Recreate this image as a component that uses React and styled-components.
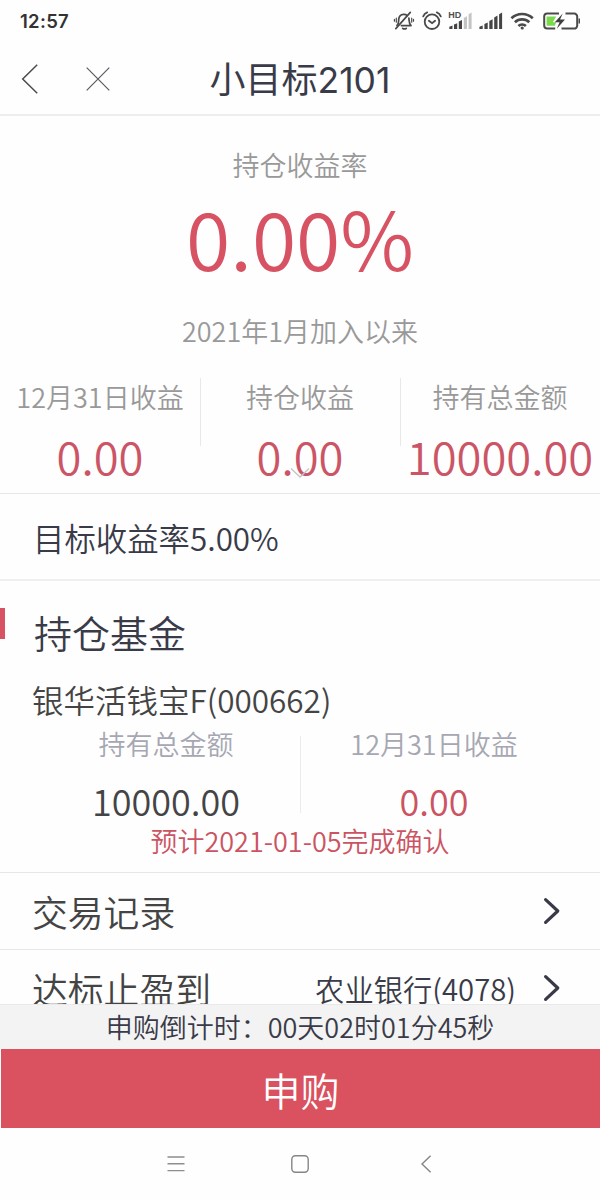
import React from 'react';
import styled, { createGlobalStyle } from 'styled-components';

const App = () => {
  return (
    <Phone>
      <GlobalStyle />
      <StatusBar>
        <Clock>12:57</Clock>
        <StatusIcons />
      </StatusBar>

      <Header>
        <HeaderButton aria-label="返回">
          <svg width="18" height="32" viewBox="0 0 18 32" fill="none">
            <path d="M16.2 2.8 1.7 17 16.2 31.2" stroke="#4a4b52" strokeWidth="1.5" />
          </svg>
        </HeaderButton>
        <HeaderButton aria-label="关闭">
          <svg width="26" height="26" viewBox="0 0 26 26" fill="none">
            <path d="M1.7 2.7 24.3 25.3M24.3 2.7 1.7 25.3" stroke="#5a5b62" strokeWidth="1.2" />
          </svg>
        </HeaderButton>
        <HeaderTitle>
          小目标<TitleNumber>2101</TitleNumber>
        </HeaderTitle>
      </Header>

      <Content>
        <Summary>
          <SummaryLabel>持仓收益率</SummaryLabel>
          <SummaryRate>0.00%</SummaryRate>
          <SummaryDate>2021年1月加入以来</SummaryDate>
          <Stats>
            <Stat>
              <StatLabel>12月31日收益</StatLabel>
              <StatValue>0.00</StatValue>
            </Stat>
            <Stat>
              <StatLabel>持仓收益</StatLabel>
              <StatValue>0.00</StatValue>
              <ExpandMark width="22" height="12" viewBox="0 0 22 12" fill="none">
                <path d="M2 1.5 11 10 20 1.5" stroke="#c3c5cc" strokeWidth="1.3" />
              </ExpandMark>
            </Stat>
            <Stat>
              <StatLabel>持有总金额</StatLabel>
              <StatValue>10000.00</StatValue>
            </Stat>
          </Stats>
        </Summary>

        <Target>目标收益率5.00%</Target>

        <Fund>
          <FundHeading>持仓基金</FundHeading>
          <FundName>银华活钱宝F(000662)</FundName>
          <FundColumns>
            <FundColumn>
              <FundLabel>持有总金额</FundLabel>
              <FundValue $color="#444446">10000.00</FundValue>
            </FundColumn>
            <FundColumn>
              <FundLabel>12月31日收益</FundLabel>
              <FundValue $color="#cb5462">0.00</FundValue>
            </FundColumn>
          </FundColumns>
          <FundNotice>预计2021-01-05完成确认</FundNotice>
        </Fund>

        <LinkRow>
          <LinkTitle>交易记录</LinkTitle>
          <Arrow />
        </LinkRow>
        <LinkRow>
          <LinkTitle>达标止盈到</LinkTitle>
          <LinkValue>农业银行(4078)</LinkValue>
          <Arrow />
        </LinkRow>
      </Content>

      <Countdown>申购倒计时：00天02时01分45秒</Countdown>
      <BuyButton>申购</BuyButton>

      <NavBar>
        <svg width="18" height="18" viewBox="0 0 18 18" stroke="#8d8d8d" strokeWidth="1.4">
          <path d="M.5 2h17M.5 8.8h17M.5 15.6h17" />
        </svg>
        <svg width="18" height="18" viewBox="0 0 18 18" fill="none">
          <rect x=".8" y=".8" width="16.4" height="16.4" rx="3.6" stroke="#858585" strokeWidth="1.4" />
        </svg>
        <svg width="18" height="18" viewBox="0 0 18 18" fill="none">
          <path d="M15.6.8 7 9l8.6 8.2" stroke="#858585" strokeWidth="1.4" />
        </svg>
      </NavBar>
    </Phone>
  );
};

const Arrow = () => (
  <ArrowIcon width="18" height="28" viewBox="0 0 18 28" fill="none">
    <path
      d="M2.6 2.6 14.8 14 2.6 25.4"
      stroke="#393a47"
      strokeWidth="3.2"
      strokeLinecap="round"
      strokeLinejoin="round"
    />
  </ArrowIcon>
);

const StatusIcons = () => (
  <svg width="190" height="24" viewBox="0 0 190 24" fill="none" stroke="#4a4a4a">
    {/* muted bell */}
    <g strokeWidth="1.7" strokeLinecap="round" strokeLinejoin="round">
      <path d="M7 16.4c2-1.7 1.6-3.9 1.7-6 .2-2.8 2-4.8 4.8-5 1.6-.1 2.8.3 3.8 1.2" />
      <path d="M18.9 9.2c.3 2.7-.1 5 2.1 7.4h-9.6M12.7 19.3c.9.9 2.7.9 3.6 0" />
      <path d="M20.3 3.4 5.8 19.6" />
      <path d="M6.3 9.2v4M4.4 10.4v1.8M21.7 9.2v4M23.5 10.4v1.8" strokeWidth="1.2" />
    </g>
    {/* alarm clock */}
    <g strokeWidth="1.8" strokeLinecap="round">
      <circle cx="42" cy="12.7" r="7.3" />
      <path d="m38.9 11.7 3.2 2.5 3-2.4" />
      <path d="M33.2 7.3c.8-1.9 2.2-3.2 4-3.9M50.8 7.3c-.8-1.9-2.2-3.2-4-3.9" />
    </g>
    <HdText x="58.3" y="9.2">HD</HdText>
    <g stroke="none" fill="#444">
      <path d="M59.3 17.8l3.2-1.2V20h-3.2zM64 15.6l3.2-1.4V20H64zM68.8 12.6l3.2-1.6v9h-3.2z" />
      <path d="M73.8 9l3.2-1.8V20h-3.2zM78.6 5.2l3-1.6V20h-3z" fill="#c4c4c4" />
      <path d="M89.4 17.8l3.3-1.2V20h-3.3zM94.4 15l3.3-1.5V20h-3.3zM99.3 12l3.3-1.8V20h-3.3zM104.2 8.4l3.3-1.8V20h-3.3zM109.1 5.2l3-1.6V20h-3z" />
    </g>
    {/* wifi */}
    <g strokeWidth="2.7">
      <path d="M121.4 9.2c6-5.6 15.4-5.6 21.4 0" />
      <path d="M124.9 13.2c4.1-3.8 10.3-3.8 14.4 0" />
      <path d="M128.4 17c2.2-2 5.3-2 7.5 0" />
      <circle cx="132.2" cy="19" r="1.6" fill="#4a4a4a" stroke="none" />
    </g>
    {/* charging battery */}
    <path d="M156.6 7.6h9.6l-3.4 5.6h3.4l-1.4 3.6h-8.2z" fill="#7bd94e" stroke="none" />
    <path
      d="M169 4.6h-11.8a3 3 0 0 0-3 3v9a3 3 0 0 0 3 3h8M175.5 4.6h8.7a3 3 0 0 1 3 3v9a3 3 0 0 1-3 3h-12.7"
      strokeWidth="2"
    />
    <path d="M172.7 4.6 164.8 13.2h4.8l-2.8 6.6 8.2-9.2h-4.9z" fill="#3e3e3e" stroke="none" />
    <path d="M189.3 9.6v5" strokeWidth="1.6" />
  </svg>
);

const GlobalStyle = createGlobalStyle`
  * {
    box-sizing: border-box;
  }

  body {
    margin: 0;
    background: #fff;
  }
`;

const Phone = styled.div`
  display: flex;
  flex-direction: column;
  width: 600px;
  height: 1200px;
  overflow: hidden;
  background: #fefefe;
  color: #3a3b48;
  font-family: 'Noto Sans CJK SC', sans-serif;
  font-weight: 350;
  white-space: nowrap;
`;

const StatusBar = styled.div`
  display: flex;
  align-items: center;
  justify-content: space-between;
  flex: none;
  height: 42px;
  padding: 0 20px;
`;

const Clock = styled.span`
  font-family: Inter, sans-serif;
  font-size: 18.5px;
  font-weight: 600;
  letter-spacing: 0.3px;
  color: #333;
`;

const HdText = styled.text`
  font-family: 'Liberation Sans', sans-serif;
  font-size: 9px;
  font-weight: bold;
  fill: #505050;
  stroke: none;
`;

const Header = styled.header`
  position: relative;
  display: flex;
  align-items: center;
  flex: none;
  gap: 46px;
  height: 74px;
  padding: 0 21px;
  border-bottom: 2px solid #ededed;
`;

const HeaderButton = styled.button`
  display: flex;
  padding: 0;
  border: 0;
  background: none;
`;

const HeaderTitle = styled.h1`
  position: absolute;
  top: -1px;
  left: 0;
  right: 0;
  margin: 0;
  font-size: 36px;
  font-weight: 400;
  line-height: 72px;
  text-align: center;
  pointer-events: none;
`;

const TitleNumber = styled.span`
  font-family: Inter, sans-serif;
  font-size: 35.5px;
`;

const Content = styled.main`
  flex: none;
  height: 888px;
  overflow: hidden;
`;

const Summary = styled.section`
  height: 378px;
  padding-top: 29px;
  border-bottom: 1px solid #e6e6e6;
  text-align: center;
`;

const SummaryLabel = styled.div`
  font-size: 27px;
  line-height: 40px;
  color: #999;
`;

const SummaryRate = styled.div`
  font-size: 80.6px;
  line-height: 102px;
  color: #d75263;
`;

const SummaryDate = styled.div`
  margin-top: 24px;
  font-size: 27px;
  line-height: 40px;
  color: #999;
`;

const Stats = styled.div`
  display: grid;
  grid-template-columns: repeat(3, 200px);
  margin-top: 27px;
`;

const Stat = styled.div`
  position: relative;
  display: flex;
  flex-direction: column;
  align-items: center;
  height: 108px;

  & + &::before {
    content: '';
    position: absolute;
    top: 0;
    left: 0;
    width: 1px;
    height: 68px;
    background: #e8e8e8;
  }
`;

const StatLabel = styled.div`
  padding-top: 1px;
  font-size: 27px;
  line-height: 36px;
  color: #999;
`;

const StatValue = styled.div`
  margin-top: 10px;
  font-size: 45.3px;
  line-height: 60px;
  color: #cb5567;
`;

const ExpandMark = styled.svg`
  position: absolute;
  top: 89px;
  left: 89px;
`;

const Target = styled.section`
  height: 87px;
  padding-left: 33px;
  border-bottom: 2px solid #efefef;
  font-size: 31.4px;
  line-height: 88px;
`;

const Fund = styled.section`
  height: 292px;
  padding-top: 27px;
  border-bottom: 1px solid #e6e6e6;
`;

const FundHeading = styled.h2`
  position: relative;
  margin: 0;
  padding-left: 34px;
  font-size: 38px;
  font-weight: 350;
  line-height: 47px;

  &::before {
    content: '';
    position: absolute;
    top: 0;
    left: 0;
    width: 5px;
    height: 31px;
    background: #d75263;
  }
`;

const FundName = styled.div`
  margin-top: 25px;
  padding-left: 32px;
  font-size: 31.5px;
  line-height: 39px;
  color: #444;
`;

const FundColumns = styled.div`
  position: relative;
  display: grid;
  grid-template-columns: 268px 268px;
  justify-content: center;
  margin-top: 7px;

  &::before {
    content: '';
    position: absolute;
    top: 10px;
    left: 300px;
    width: 1px;
    height: 77px;
    background: #ebebeb;
  }
`;

const FundColumn = styled.div`
  text-align: center;
`;

const FundLabel = styled.div`
  font-size: 27px;
  line-height: 36px;
  color: #a6a7b2;
`;

const FundValue = styled.div`
  margin-top: 14px;
  font-size: 36px;
  line-height: 49px;
  color: ${({ $color }) => $color};
`;

const FundNotice = styled.div`
  font-size: 27px;
  line-height: 32px;
  text-align: center;
  color: #cb5462;
`;

const LinkRow = styled.div`
  display: flex;
  align-items: center;
  height: 77px;
  padding: 0 39px 0 32px;
  border-bottom: 1px solid #e6e6e6;
`;

const LinkTitle = styled.span`
  flex: 1;
  font-size: 35.8px;
  line-height: 76px;
  color: #444;
`;

const LinkValue = styled.span`
  margin-right: 27px;
  font-size: 29.3px;
  line-height: 76px;
`;

const ArrowIcon = styled.svg`
  flex: none;
`;

const Countdown = styled.div`
  flex: none;
  height: 45px;
  border-top: 1px solid #e9e9e9;
  background: #f3f3f3;
  font-size: 27px;
  line-height: 43px;
  text-align: center;
`;

const BuyButton = styled.button`
  flex: none;
  height: 79px;
  margin-left: 1px;
  padding: 0;
  border: 0;
  background: #da5160;
  color: #fff;
  font-family: inherit;
  font-size: 39px;
  font-weight: 350;
  line-height: 78px;
`;

const NavBar = styled.nav`
  display: flex;
  align-items: center;
  justify-content: space-between;
  flex: none;
  height: 72px;
  padding: 0 167px;
`;

export default App;
